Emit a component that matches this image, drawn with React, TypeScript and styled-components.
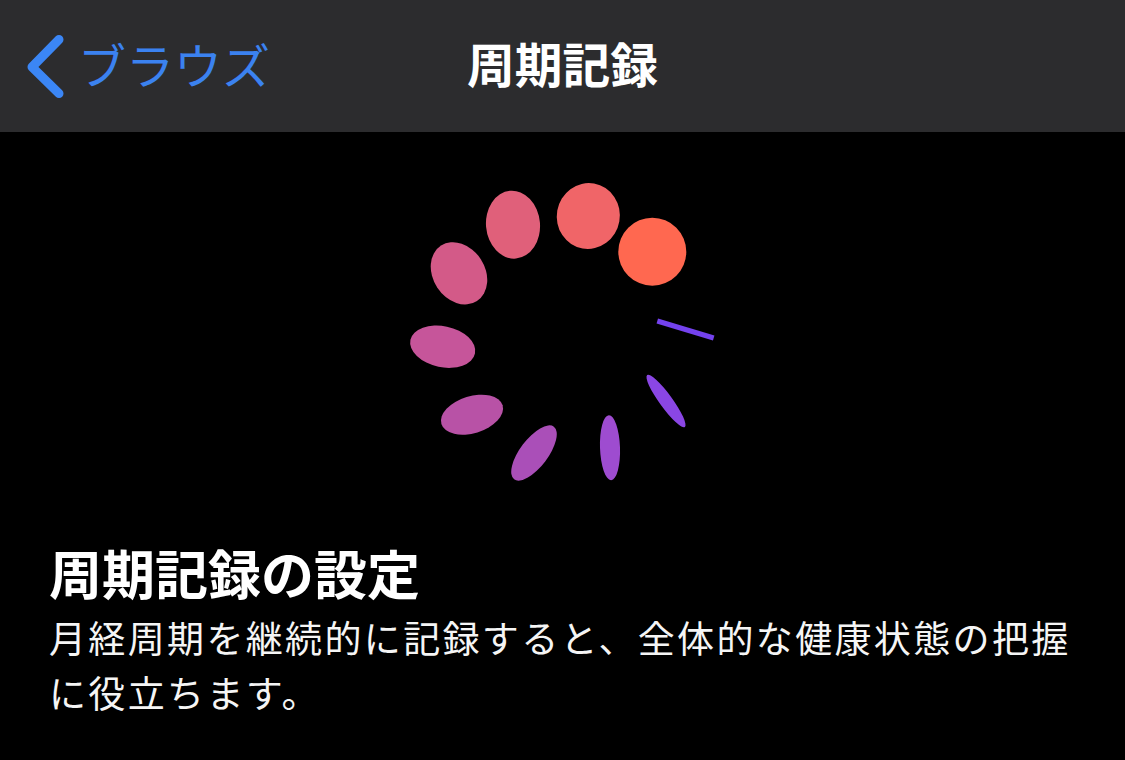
import React from 'react';
import styled, { createGlobalStyle } from 'styled-components';

const GlobalStyle = createGlobalStyle`
  html, body {
    margin: 0;
    padding: 0;
    background: #000;
  }
  body {
    font-family: "Noto Sans CJK JP", "Noto Sans", sans-serif;
    color: #fff;
  }
`;

const Page = styled.div`
  width: 1125px;
  height: 760px;
  overflow: hidden;
  display: flex;
  flex-direction: column;
  background: #000;
`;

const NavBar = styled.header`
  height: 132px;
  flex: none;
  display: grid;
  grid-template-columns: 1fr auto 1fr;
  align-items: center;
  background: #2c2c2e;
`;

const BackLink = styled.a`
  display: flex;
  align-items: center;
  gap: 13px;
  padding-left: 27px;
  color: #3b82f0;
`;

const BackLabel = styled.span`
  margin-bottom: 6px;
  font-size: 48px;
  font-weight: 400;
  line-height: 64px;
`;

const NavTitle = styled.h1`
  margin: 0 0 6px;
  font-size: 47.7px;
  font-weight: 700;
  line-height: 64px;
  color: #fff;
`;

const SpinnerWrap = styled.div`
  display: flex;
  justify-content: center;
  padding-top: 43px;
`;

const Spinner = styled.svg`
  display: block;
  width: 320px;
  height: 310px;
`;

const Copy = styled.section`
  padding: 49px 49px 0;
`;

const Heading = styled.h2`
  margin: 0;
  font-size: 53px;
  font-weight: 700;
  line-height: 76px;
`;

const Body = styled.p`
  margin: 0;
  font-size: 37px;
  font-weight: 400;
  letter-spacing: 2.35px;
  line-height: 55px;
  color: #f5f5f5;
`;

// cx, cy, rx, ry, rotation: ring of petals going from round/orange to thin/violet
const petals: [number, number, number, number, number, string][] = [
  [652.3, 251.7, 34, 34, 0, '#ff6850'],
  [588.3, 216, 31.5, 33, 10, '#f06568'],
  [513, 224.7, 27, 34, -5, '#e0607a'],
  [459, 273.3, 26, 33, -33, '#d35a88'],
  [442.7, 346.7, 33, 20.5, 12, '#c6559a'],
  [472, 414.7, 32, 18.5, -17, '#b852a6'],
  [534, 453, 14, 33, 37, '#aa4fb8'],
  [610, 447.7, 10, 32.5, -2, '#9e4cd0'],
  [666, 401, 6.5, 32, -36, '#8a46e4'],
];

export default function App() {
  return (
    <Page>
      <GlobalStyle />
      <NavBar>
        <BackLink>
          <svg width="38" height="64" viewBox="0 0 38 64" fill="none">
            <path
              d="M32 5.5 L5 33 L32 59.5"
              stroke="#3b86f5"
              strokeWidth="9"
              strokeLinecap="round"
              strokeLinejoin="round"
            />
          </svg>
          <BackLabel>ブラウズ</BackLabel>
        </BackLink>
        <NavTitle>周期記録</NavTitle>
        <div />
      </NavBar>
      <SpinnerWrap>
        <Spinner viewBox="403 175 320 310">
          {petals.map(([cx, cy, rx, ry, rot, fill]) => (
            <ellipse
              key={cx}
              cx={cx}
              cy={cy}
              rx={rx}
              ry={ry}
              fill={fill}
              transform={`rotate(${rot} ${cx} ${cy})`}
            />
          ))}
          <line x1="657.3" y1="321" x2="713.7" y2="338" stroke="#7442ee" strokeWidth="5" />
        </Spinner>
      </SpinnerWrap>
      <Copy>
        <Heading>周期記録の設定</Heading>
        <Body>
          月経周期を継続的に記録すると、全体的な健康状態の把握
          <br />
          に役立ちます。
        </Body>
      </Copy>
    </Page>
  );
}
